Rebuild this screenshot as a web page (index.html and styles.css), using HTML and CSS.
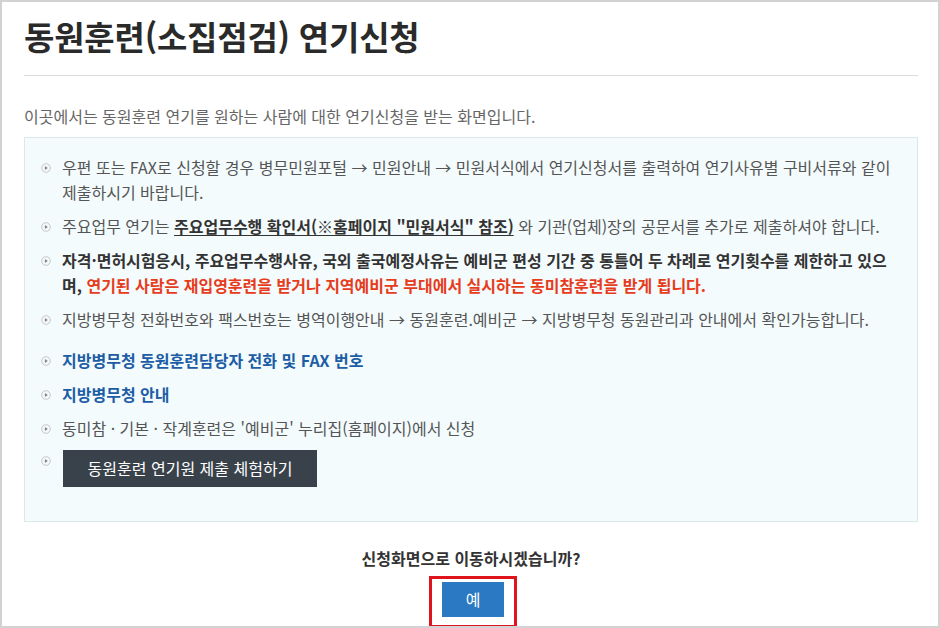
FILE: index.html
```html
<!DOCTYPE html>
<html lang="ko">
<head>
<meta charset="utf-8">
<title>동원훈련(소집점검) 연기신청</title>
<link rel="stylesheet" href="styles.css">
</head>
<body>
<div class="frame">
  <h1 class="title">동원훈련(소집점검) 연기신청</h1>
  <p class="intro">이곳에서는 동원훈련 연기를 원하는 사람에 대한 연기신청을 받는 화면입니다.</p>
  <div class="infobox">
    <ul class="list">
      <li class="item"><span class="bullet"><svg viewBox="0 0 10 10" width="10" height="10"><circle cx="5" cy="5" r="4.3" fill="#f7f8f9" stroke="#c3c8cc" stroke-width="1"/><path d="M3.9 3 L6.8 5 L3.9 7 Z" fill="#80868b"/></svg></span><div class="txt">우편 또는 FAX로 신청할 경우 병무민원포털 → 민원안내 → 민원서식에서 연기신청서를 출력하여 연기사유별 구비서류와 같이 제출하시기 바랍니다.</div></li>
      <li class="item"><span class="bullet"><svg viewBox="0 0 10 10" width="10" height="10"><circle cx="5" cy="5" r="4.3" fill="#f7f8f9" stroke="#c3c8cc" stroke-width="1"/><path d="M3.9 3 L6.8 5 L3.9 7 Z" fill="#80868b"/></svg></span><div class="txt">주요업무 연기는 <u class="ul">주요업무수행 확인서(※홈페이지 "민원서식" 참조)</u> 와 기관(업체)장의 공문서를 추가로 제출하셔야 합니다.</div></li>
      <li class="item"><span class="bullet"><svg viewBox="0 0 10 10" width="10" height="10"><circle cx="5" cy="5" r="4.3" fill="#f7f8f9" stroke="#c3c8cc" stroke-width="1"/><path d="M3.9 3 L6.8 5 L3.9 7 Z" fill="#80868b"/></svg></span><div class="txt strong">자격·면허시험응시, 주요업무수행사유, 국외 출국예정사유는 예비군 편성 기간 중 통틀어 두 차례로 연기횟수를 제한하고 있으며, <span class="red">연기된 사람은 재입영훈련을 받거나 지역예비군 부대에서 실시하는 동미참훈련을 받게 됩니다.</span></div></li>
      <li class="item"><span class="bullet"><svg viewBox="0 0 10 10" width="10" height="10"><circle cx="5" cy="5" r="4.3" fill="#f7f8f9" stroke="#c3c8cc" stroke-width="1"/><path d="M3.9 3 L6.8 5 L3.9 7 Z" fill="#80868b"/></svg></span><div class="txt">지방병무청 전화번호와 팩스번호는 병역이행안내 → 동원훈련.예비군 → 지방병무청 동원관리과 안내에서 확인가능합니다.</div></li>
      <li class="item gap"><span class="bullet"><svg viewBox="0 0 10 10" width="10" height="10"><circle cx="5" cy="5" r="4.3" fill="#f7f8f9" stroke="#c3c8cc" stroke-width="1"/><path d="M3.9 3 L6.8 5 L3.9 7 Z" fill="#80868b"/></svg></span><div class="txt"><a class="link" href="#">지방병무청 동원훈련담당자 전화 및 FAX 번호</a></div></li>
      <li class="item"><span class="bullet"><svg viewBox="0 0 10 10" width="10" height="10"><circle cx="5" cy="5" r="4.3" fill="#f7f8f9" stroke="#c3c8cc" stroke-width="1"/><path d="M3.9 3 L6.8 5 L3.9 7 Z" fill="#80868b"/></svg></span><div class="txt"><a class="link" href="#">지방병무청 안내</a></div></li>
      <li class="item"><span class="bullet"><svg viewBox="0 0 10 10" width="10" height="10"><circle cx="5" cy="5" r="4.3" fill="#f7f8f9" stroke="#c3c8cc" stroke-width="1"/><path d="M3.9 3 L6.8 5 L3.9 7 Z" fill="#80868b"/></svg></span><div class="txt">동미참 · 기본 · 작계훈련은 '예비군' 누리집(홈페이지)에서 신청</div></li>
      <li class="item btnitem"><span class="bullet"><svg viewBox="0 0 10 10" width="10" height="10"><circle cx="5" cy="5" r="4.3" fill="#f7f8f9" stroke="#c3c8cc" stroke-width="1"/><path d="M3.9 3 L6.8 5 L3.9 7 Z" fill="#80868b"/></svg></span><div class="txt"><button class="darkbtn" type="button">동원훈련 연기원 제출 체험하기</button></div></li>
    </ul>
  </div>
  <p class="question">신청화면으로 이동하시겠습니까?</p>
  <div class="confirm">
    <span class="highlight"><button class="yesbtn" type="button">예</button></span>
  </div>
</div>
</body>
</html>
```

FILE: styles.css
```css
html, body {
  margin: 0;
  padding: 0;
  background: #fff;
}
body {
  font-family: "Noto Sans CJK KR", "Noto Sans", "Liberation Sans", sans-serif;
  color: #555;
}
.frame {
  box-sizing: border-box;
  width: 940px;
  height: 628px;
  border: 2px solid #d2d2d2;
  padding: 0 20px 0 22px;
  overflow: hidden;
}
.title {
  margin: 0;
  padding: 14px 0 19px;
  font-size: 33px;
  line-height: 40px;
  font-weight: 700;
  color: #2a2a2a;
  letter-spacing: -0.2px;
  border-bottom: 1px solid #dcdcdc;
}
.intro {
  margin: 29px 0 10px;
  font-size: 16px;
  line-height: 22px;
  color: #666;
}
.infobox {
  border: 1px solid #dde8eb;
  background: #f3fbfd;
  padding: 17px 12px 25px 16px;
}
.list {
  list-style: none;
  margin: 0;
  padding: 0;
}
.item {
  display: flex;
  align-items: flex-start;
  margin: 0 0 9px;
  font-size: 16px;
  line-height: 25px;
}
.item.gap {
  margin-top: 16px;
}
.bullet {
  flex: 0 0 21px;
  height: 25px;
  display: flex;
  align-items: center;
}
.bullet svg {
  display: block;
}
.txt {
  flex: 1;
  color: #555;
}
.ul {
  font-weight: 700;
  color: #333;
  text-decoration: underline;
  text-underline-offset: 2px;
}
.strong {
  font-weight: 700;
  color: #333;
}
.red {
  color: #e73c1c;
}
.link {
  font-weight: 700;
  color: #1c5da5;
  text-decoration: none;
}
.btnitem {
  margin-top: 8px;
}
.btnitem .bullet {
  height: 22px;
}
.darkbtn {
  display: block;
  width: 254px;
  height: 37px;
  margin: 0 0 0 1px;
  padding: 0;
  border: 0;
  background: #39424a;
  color: #fff;
  font-family: inherit;
  font-size: 16px;
  line-height: 37px;
  cursor: pointer;
}
.question {
  margin: 25px 0 7px;
  text-align: center;
  font-size: 16px;
  line-height: 22px;
  font-weight: 700;
  color: #333;
}
.confirm {
  display: flex;
  justify-content: center;
  padding-left: 4px;
}
.highlight {
  display: inline-block;
  border: 3px solid #e0141c;
  padding: 3px 10px 8px;
}
.yesbtn {
  display: block;
  width: 62px;
  height: 35px;
  padding: 0;
  border: 0;
  background: #2b79c2;
  color: #fff;
  font-family: inherit;
  font-size: 16px;
  line-height: 35px;
  cursor: pointer;
}
```
